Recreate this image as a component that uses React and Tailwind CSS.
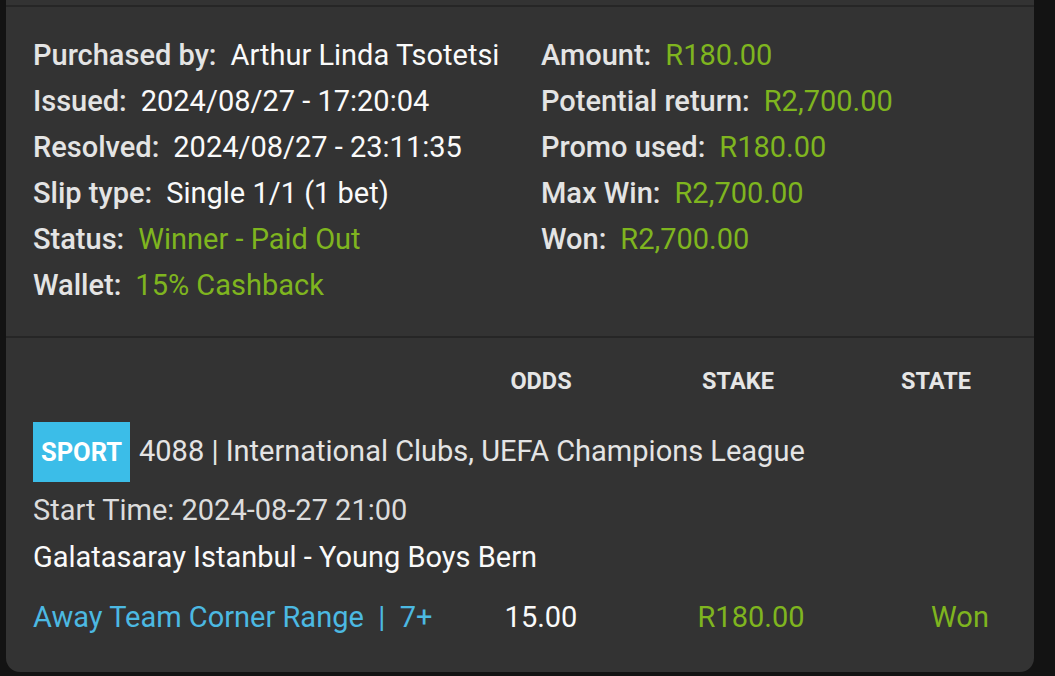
import React from "react";

const FONT = { fontFamily: "Roboto, 'Noto Sans', Arial, sans-serif" };

const leftRows = [
  { label: "Purchased by:", value: "Arthur Linda Tsotetsi" },
  { label: "Issued:", value: "2024/08/27 - 17:20:04" },
  { label: "Resolved:", value: "2024/08/27 - 23:11:35" },
  { label: "Slip type:", value: "Single 1/1 (1 bet)" },
  { label: "Status:", value: "Winner - Paid Out", green: true },
  { label: "Wallet:", value: "15% Cashback", green: true },
];

const rightRows = [
  { label: "Amount:", value: "R180.00", green: true },
  { label: "Potential return:", value: "R2,700.00", green: true },
  { label: "Promo used:", value: "R180.00", green: true },
  { label: "Max Win:", value: "R2,700.00", green: true },
  { label: "Won:", value: "R2,700.00", green: true },
];

function InfoRow({ label, value, green }) {
  return (
    <div className="flex items-center h-[46px] whitespace-nowrap">
      <span className="font-medium text-[#e4e4e4]">{label}</span>
      <span
        className={`ml-[14px] ${green ? "text-[#7fb51f]" : "text-[#fafafa]"}`}
      >
        {value}
      </span>
    </div>
  );
}

export default function App() {
  return (
    <div
      className="w-[1055px] h-[676px] overflow-hidden bg-[#131313] pl-[6px] pr-[21px]"
      style={FONT}
    >
      <div className="bg-[#333333] rounded-b-[14px] h-[672px] text-[29px]">
        <div className="h-[7px] border-b-2 border-[#262626]" />

        {/* Slip details */}
        <div className="grid grid-cols-[508px_1fr] pl-[27px] pt-[26px] pb-[27px] border-b-2 border-[#262626]">
          <div>
            {leftRows.map((r) => (
              <InfoRow key={r.label} {...r} />
            ))}
          </div>
          <div>
            {rightRows.map((r) => (
              <InfoRow key={r.label} {...r} />
            ))}
          </div>
        </div>

        {/* Bet */}
        <div className="pl-[27px] pt-[26px]">
          <div className="grid grid-cols-[1fr_196px_196px_196px] h-[30px] items-center text-[23.5px] font-bold text-[#e6e6e6]">
            <span />
            <span className="text-center pr-[6px]">ODDS</span>
            <span className="text-center pr-[4px]">STAKE</span>
            <span className="text-center">STATE</span>
          </div>

          <div className="flex items-center mt-[28px] whitespace-nowrap">
            <span className="bg-[#3bbde8] text-white font-bold text-[25.5px] h-[60px] w-[97px] flex items-center justify-center">
              SPORT
            </span>
            <span className="ml-[9px] text-[#e4e4e4]">
              4088 | International Clubs, UEFA Champions League
            </span>
          </div>

          <div className="h-[46px] mt-[6px] flex items-center text-[#dcdcdc]">
            Start Time: 2024-08-27 21:00
          </div>
          <div className="h-[48px] flex items-center text-[#fafafa]">
            Galatasaray Istanbul - Young Boys Bern
          </div>

          <div className="grid grid-cols-[1fr_196px_196px_196px] h-[46px] mt-[13px] items-center whitespace-nowrap">
            <span className="text-[#4cb9e2]">
              Away Team Corner Range&nbsp;&nbsp;|&nbsp;&nbsp;7+
            </span>
            <span className="text-center pr-[6px] text-[#fafafa]">15.00</span>
            <span className="text-center pl-[22px] text-[#7fb51f]">R180.00</span>
            <span className="text-center pl-[48px] text-[#7fb51f]">Won</span>
          </div>
        </div>
      </div>
    </div>
  );
}
